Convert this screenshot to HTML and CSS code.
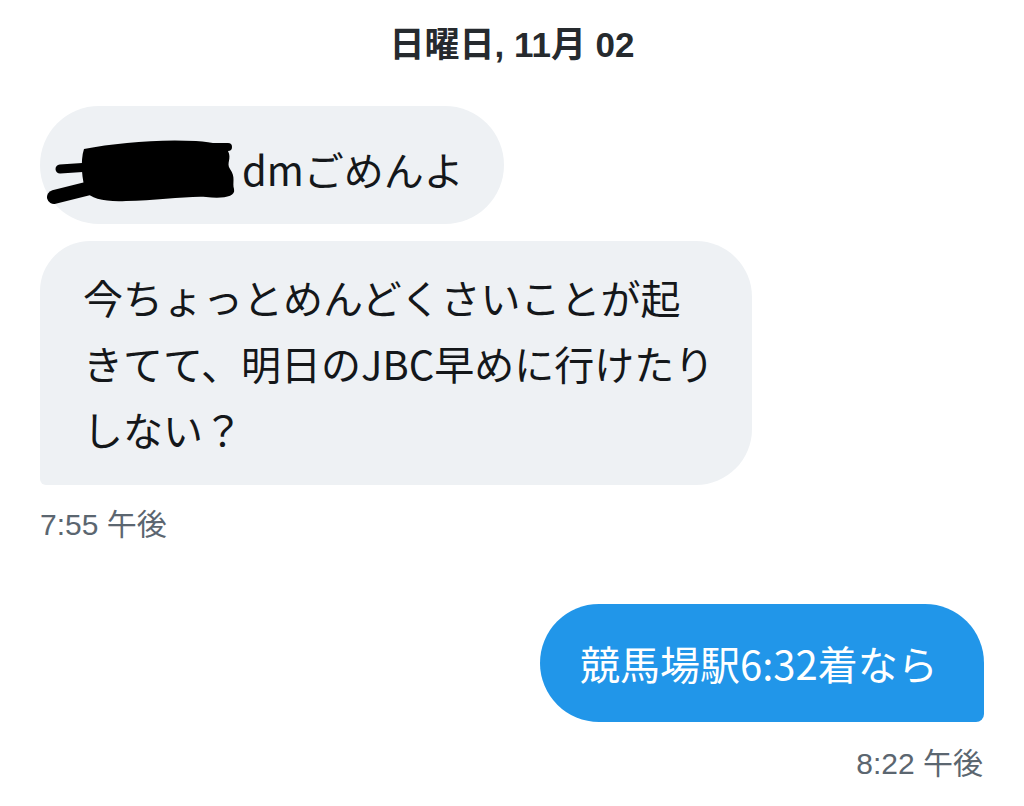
FILE: index.html
```html
<!DOCTYPE html>
<html lang="ja">
<head>
<meta charset="utf-8">
<title>DM</title>
<link rel="stylesheet" href="styles.css">
</head>
<body>
<main class="chat">
  <div class="date">日曜日, 11月 02</div>

  <div class="group incoming">
    <div class="bubble first"><svg class="redact" width="200" height="72" viewBox="0 0 200 72"><g fill="#000"><path d="M38 14 C70 8 110 4 150 6 C168 7 178 10 182 16 C186 24 180 28 184 34 C190 42 186 48 188 54 C190 62 176 64 160 62 C140 61 110 66 80 66 C60 67 44 64 40 56 C36 46 34 26 38 14 Z"/></g><g fill="none" stroke="#000" stroke-linecap="round" stroke-linejoin="round"><path d="M8 62 L40 54 L80 44" stroke-width="14"/><path d="M14 34 L44 32" stroke-width="9"/><path d="M150 12 L182 12" stroke-width="8"/></g></svg><span class="msg">dmごめんよ</span></div>
    <div class="bubble last">今ちょっとめんどくさいことが起<br>きてて、明日のJBC早めに行けたり<br>しない？</div>
    <div class="time">7:55 午後</div>
  </div>

  <div class="group outgoing">
    <div class="bubble blue">競馬場駅6:32着なら</div>
    <div class="time">8:22 午後</div>
  </div>
</main>
</body>
</html>
```
FILE: styles.css
```css
html, body {
  margin: 0;
  padding: 0;
  background: #ffffff;
}

.chat {
  width: 1024px;
  height: 806px;
  box-sizing: border-box;
  padding: 22px 40px 0 40px;
  display: flex;
  flex-direction: column;
  font-family: "Noto Sans CJK JP", "Liberation Sans", sans-serif;
  color: #14171a;
  overflow: hidden;
}

.date {
  text-align: center;
  font-family: "Liberation Sans", "Noto Sans CJK JP", sans-serif;
  font-weight: 700;
  font-size: 35px;
  line-height: 46px;
  color: #262a2e;
}

.group {
  display: flex;
  flex-direction: column;
}

.incoming {
  align-items: flex-start;
  margin-top: 38px;
}

.outgoing {
  align-items: flex-end;
  margin-top: 59px;
}

.bubble {
  font-size: 40px;
  line-height: 66px;
  box-sizing: border-box;
}

.incoming .bubble {
  background: #eef1f4;
}

.first {
  height: 118px;
  display: flex;
  align-items: center;
  padding: 8px 40px 0 6px;
  border-radius: 59px;
  white-space: nowrap;
}

.redact {
  display: block;
  flex: none;
  margin-right: -4px;
  margin-top: 4px;
}

.msg {
  flex: none;
}

.last {
  margin-top: 17px;
  width: 712px;
  height: 244px;
  padding: 23px 20px 0 43px;
  border-radius: 50px 56px 56px 6px;
}

.blue {
  background: #2196e9;
  color: #ffffff;
  height: 118px;
  width: 444px;
  display: flex;
  align-items: center;
  padding: 0 0 0 40px;
  border-radius: 59px 59px 8px 59px;
}

.time {
  font-size: 30px;
  line-height: 40px;
  color: #5b6670;
  font-family: "Liberation Sans", "Noto Sans CJK JP", sans-serif;
}

.incoming .time {
  margin-top: 20px;
}

.outgoing .time {
  margin-top: 22px;
  margin-right: 1px;
}
```
